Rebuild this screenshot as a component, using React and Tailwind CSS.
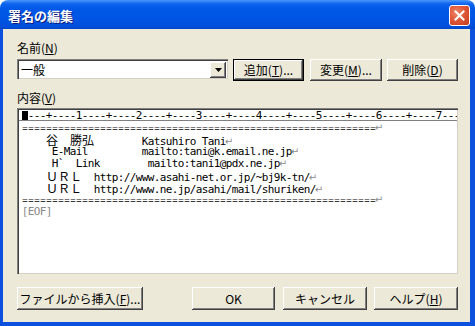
import React from "react";

const isFull = (ch) => ch.charCodeAt(0) > 0x2e80;

function Cell({ ch }) {
  if (ch === "↵") {
    return (
      <span className="w-[6px] shrink-0 flex justify-center text-[10px] text-[#8c8c8c] font-['DejaVu_Sans',sans-serif]">
        ↵
      </span>
    );
  }
  if (ch === "=") {
    return <span className="w-[6px] shrink-0 flex justify-center text-[9px]">=</span>;
  }
  if (isFull(ch)) {
    return (
      <span className="w-[12px] shrink-0 flex justify-center text-[12px] font-['Noto_Sans_CJK_JP',sans-serif]">
        {ch}
      </span>
    );
  }
  return <span className="w-[6px] shrink-0 flex justify-center">{ch}</span>;
}

function Line({ s, gray }) {
  return (
    <div
      className={
        gray
          ? "h-[12px] leading-[12px] flex items-baseline whitespace-pre text-[#8a8a8a]"
          : "h-[12px] leading-[12px] flex items-baseline whitespace-pre text-black"
      }
    >
      {[...s].map((ch, i) => (
        <Cell key={i} ch={ch} />
      ))}
    </div>
  );
}

function Btn({ children, w, def }) {
  return (
    <div
      className={
        (def
          ? "border border-black shadow-[inset_-1px_-1px_0_#404040,inset_1px_1px_0_#ffffff,inset_-2px_-2px_0_#808080] "
          : "shadow-[inset_-1px_-1px_0_#404040,inset_1px_1px_0_#ffffff,inset_-2px_-2px_0_#808080] ") +
        w +
        " bg-[#ECE9D8] flex items-center justify-center text-[12px] leading-none text-black shrink-0"
      }
    >
      {children}
    </div>
  );
}

const U = ({ c }) => <span className="underline underline-offset-[1px]">{c}</span>;

export default function App() {
  const eq = "=".repeat(59) + "↵";
  const lines = [
    eq,
    "    谷  勝弘        Katsuhiro Tani↵",
    "     E-Mail         mailto:tani@k.email.ne.jp↵",
    "     H`  Link        mailto:tani1@pdx.ne.jp↵",
    "    ＵＲＬ  http://www.asahi-net.or.jp/~bj9k-tn/↵",
    "    ＵＲＬ  http://www.ne.jp/asahi/mail/shuriken/↵",
    eq,
  ];
  const ruler = [];
  for (let c = 1; c < 73; c++) {
    const n = c + 1;
    ruler.push(n % 10 === 0 ? String(n / 10) : n % 5 === 0 ? "+" : "-");
  }

  return (
    <div className="w-[475px] h-[326px] bg-white flex flex-col font-['Noto_Sans_CJK_JP',sans-serif] overflow-hidden">
      {/* title bar */}
      <div className="h-[29px] shrink-0 rounded-t-[8px] bg-[linear-gradient(to_bottom,#4a98fa_0px,#2a7cf6_2px,#0e62ee_4px,#0058e8_9px,#0056e5_16px,#0052e0_22px,#004fdb_26px,#0047cc_29px)] flex items-center pl-[8px] pr-[5px] pt-[2px]">
        <div className="flex-1 text-white font-bold text-[13px] leading-none [text-shadow:1px_1px_0_#0a1a7a]">
          署名の編集
        </div>
        <div className="w-[21px] h-[21px] rounded-[3px] border border-white bg-[radial-gradient(circle_at_35%_35%,#f0866a_0%,#e0583a_45%,#c63c1b_100%)] flex items-center justify-center">
          <svg width="11" height="11" viewBox="0 0 11 11">
            <path d="M1.5 1.5 L9.5 9.5 M9.5 1.5 L1.5 9.5" stroke="#ffffff" strokeWidth="2" strokeLinecap="square" />
          </svg>
        </div>
      </div>

      {/* body */}
      <div className="flex-1 bg-[#ECE9D8] border-l-[3px] border-r-[5px] border-b-[4px] border-[#0C50DE] flex flex-col pl-[14px] pr-[12px] pt-[12px]">
        <div className="h-[14px] leading-[14px] text-[12px] text-black">
          名前(<U c="N" />)
        </div>
        <div className="mt-[4px] h-[22px] flex items-start">
          <div className="w-[211px] h-[20px] bg-white border-t border-l border-[#808080] border-b-white border-r-white shadow-[inset_1px_1px_0_#404040,inset_-1px_-1px_0_#D4D0C8] flex items-center pl-[3px] pr-[2px]">
            <span className="flex-1 text-[12px] leading-none text-black">一般</span>
            <div className="w-[16px] h-[16px] bg-[#ECE9D8] shadow-[inset_-1px_-1px_0_#404040,inset_1px_1px_0_#ffffff,inset_-2px_-2px_0_#808080] flex items-center justify-center">
              <svg width="7" height="4" viewBox="0 0 7 4">
                <path d="M0 0 H7 L3.5 4 Z" fill="#000" />
              </svg>
            </div>
          </div>
          <div className="ml-[5px]">
            <Btn w="w-[71px] h-[22px]" def>
              追加(<U c="T" />)...
            </Btn>
          </div>
          <div className="ml-[6px]">
            <Btn w="w-[72px] h-[22px]">
              変更(<U c="M" />)...
            </Btn>
          </div>
          <div className="ml-[5px]">
            <Btn w="w-[71px] h-[22px]">
              削除(<U c="D" />)
            </Btn>
          </div>
        </div>
        <div className="mt-[10px] h-[14px] leading-[14px] text-[12px] text-black">
          内容(<U c="V" />)
        </div>
        <div className="mt-[3px] h-[166px] bg-white border-t border-l border-[#808080] border-b-white border-r-white shadow-[inset_1px_1px_0_#404040,inset_-1px_-1px_0_#D4D0C8] p-[1px] flex flex-col overflow-hidden">
          <div className="h-[11px] shrink-0 border-b border-[#808080] pl-[3px] flex items-center overflow-hidden whitespace-pre text-[11px] leading-[11px] text-black font-['DejaVu_Sans_Mono',monospace]">
            <span className="w-[6px] h-[9px] shrink-0 bg-black" />
            {ruler.map((ch, i) => (
              <span key={i} className="w-[6px] h-[11px] shrink-0 flex justify-center">
                {ch}
              </span>
            ))}
          </div>
          <div className="pt-[1px] pl-[3px] text-[11px] font-['DejaVu_Sans_Mono',monospace]">
            {lines.map((l, i) => (
              <Line key={i} s={l} />
            ))}
            <Line s="[EOF]" gray />
          </div>
        </div>
        <div className="mt-[13px] h-[23px] flex justify-between">
          <Btn w="w-[126px] h-[23px]">
            ファイルから挿入(<U c="F" />)...
          </Btn>
          <div className="flex">
            <Btn w="w-[83px] h-[23px]">OK</Btn>
            <div className="ml-[8px]">
              <Btn w="w-[84px] h-[23px]">キャンセル</Btn>
            </div>
            <div className="ml-[7px]">
              <Btn w="w-[84px] h-[23px]">
                ヘルプ(<U c="H" />)
              </Btn>
            </div>
          </div>
        </div>
      </div>
    </div>
  );
}
